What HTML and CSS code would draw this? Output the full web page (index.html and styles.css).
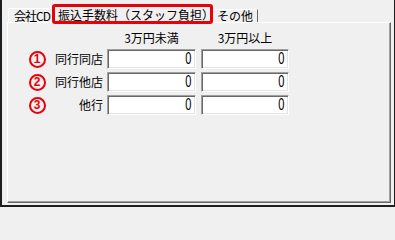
FILE: index.html
```html
<!DOCTYPE html>
<html lang="ja">
<head>
<meta charset="utf-8">
<link rel="stylesheet" href="styles.css">
</head>
<body>
<div class="window">
  <div class="tabs">
    <div class="tab tab-first">会社CD</div>
    <div class="tab tab-active">振込手数料（スタッフ負担）</div>
    <div class="tab tab-last">その他</div>
  </div>
  <div class="panel">
    <div class="grid">
      <div></div><div></div>
      <div class="head">3万円未満</div>
      <div class="head">3万円以上</div>

      <div class="num"><span class="circle">1</span></div>
      <div class="label">同行同店</div>
      <div class="field"><span class="val">0</span></div>
      <div class="field"><span class="val">0</span></div>

      <div class="num"><span class="circle">2</span></div>
      <div class="label">同行他店</div>
      <div class="field"><span class="val">0</span></div>
      <div class="field"><span class="val">0</span></div>

      <div class="num"><span class="circle">3</span></div>
      <div class="label">他行</div>
      <div class="field"><span class="val">0</span></div>
      <div class="field"><span class="val">0</span></div>
    </div>
  </div>
</div>
</body>
</html>
```

FILE: styles.css
```css
html, body {
  margin: 0;
  padding: 0;
  background: #f0f0f0;
}
body {
  font-family: "Noto Sans CJK JP", "Noto Sans", sans-serif;
  font-size: 12px;
  color: #000;
}
.window {
  width: 395px;
  height: 207px;
  box-sizing: border-box;
  border-left: 2px solid #1e1e1e;
  border-right: 1px solid #1e1e1e;
  border-bottom: 2px solid #1e1e1e;
  background: #f0f0f0;
  padding-top: 4px;
}
.tabs {
  display: flex;
  align-items: flex-end;
  height: 18px;
  margin-left: 6px;
}
.tab {
  box-sizing: border-box;
  line-height: 12px;
  white-space: nowrap;
}
.tab-first {
  width: 44px;
  height: 14px;
  padding: 1px 0 0 5px;
  border-top: 1px solid #fff;
  border-left: 1px solid #fff;
  border-top-left-radius: 2px;
  letter-spacing: -1px;
}
.tab-active {
  position: relative;
  z-index: 1;
  width: 161px;
  height: 20px;
  margin-bottom: -2px;
  padding: 2px 0 0 3px;
  border: 3px solid #e8000b;
  border-radius: 3px;
  background: #f0f0f0;
}
.tab-last {
  width: 45px;
  height: 13px;
  padding: 0 0 0 4px;
  border-top: 1px solid #fff;
  border-right: 1px solid #696969;
}
.panel {
  box-sizing: border-box;
  width: 384px;
  height: 181px;
  margin-left: 5px;
  border-top: 1px solid #fff;
  border-left: 1px solid #fff;
  border-right: 1px solid #696969;
  border-bottom: 1px solid #696969;
  box-shadow: inset -1px -1px 0 #a0a0a0;
  padding: 9px 0 0 20px;
}
.grid {
  display: grid;
  grid-template-columns: 18px 51px 89px 88px;
  grid-template-rows: 14px 20px 20px 20px;
  column-gap: 5px;
  row-gap: 3px;
  align-items: center;
}
.head {
  text-align: center;
  line-height: 14px;
  margin-top: -2px;
}
.num {
  display: flex;
  justify-content: center;
  align-items: center;
}
.circle {
  box-sizing: border-box;
  width: 17px;
  height: 17px;
  border: 2px solid #e8000b;
  border-radius: 50%;
  color: #e8000b;
  font-family: "Liberation Sans", sans-serif;
  font-weight: bold;
  font-size: 12px;
  line-height: 13px;
  text-align: center;
}
.label {
  text-align: right;
  line-height: 20px;
  margin-right: -1px;
}
.field {
  box-sizing: border-box;
  height: 20px;
  background: #fff;
  border-top: 1px solid #a0a0a0;
  border-left: 1px solid #a0a0a0;
  border-right: 1px solid #fff;
  border-bottom: 1px solid #fff;
  box-shadow: inset 1px 1px 0 #696969, inset -1px -1px 0 #e3e3e3;
  text-align: right;
  padding-right: 4px;
  font-family: "Liberation Sans", sans-serif;
  font-size: 17px;
  line-height: 18px;
}
.val {
  display: inline-block;
  transform: scaleX(0.65);
  transform-origin: right center;
}
```
